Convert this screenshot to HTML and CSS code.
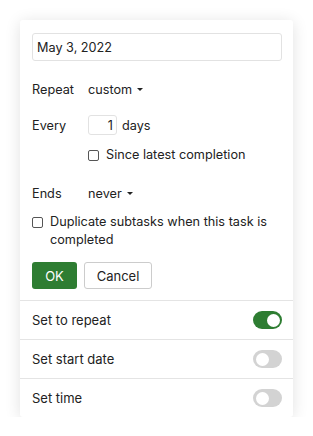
FILE: index.html
```html
<!DOCTYPE html>
<html lang="en">
<head>
    <meta charset="UTF-8">
    <meta name="viewport" content="width=device-width, initial-scale=1.0">
    <title>Repeat</title>
    <link rel="stylesheet" href="styles.css">
</head>
<body>

<div class="card">
    <div class="form">
        <input class="date" type="text" value="May 3, 2022">

        <div class="row repeat-row">
            <span class="label">Repeat</span>
            <span class="select">custom <span class="caret"></span></span>
        </div>

        <div class="row every-row">
            <span class="label">Every</span>
            <input class="num" type="text" value="1">
            <span class="unit">days</span>
        </div>

        <label class="check since">
            <span class="box"></span>
            <span>Since latest completion</span>
        </label>

        <div class="row ends-row">
            <span class="label">Ends</span>
            <span class="select">never <span class="caret"></span></span>
        </div>

        <label class="check dup">
            <span class="box"></span>
            <span>Duplicate subtasks when this task is completed</span>
        </label>

        <div class="buttons">
            <button class="btn ok">OK</button>
            <button class="btn cancel">Cancel</button>
        </div>
    </div>

    <div class="option">
        <span>Set to repeat</span>
        <span class="toggle on"><span class="knob"></span></span>
    </div>
    <div class="option">
        <span>Set start date</span>
        <span class="toggle"><span class="knob"></span></span>
    </div>
    <div class="option">
        <span>Set time</span>
        <span class="toggle"><span class="knob"></span></span>
    </div>
</div>

</body>
</html>
```

FILE: styles.css
```css
body {
    margin: 0;
    background: #fff;
    font-family: Inter, "Noto Sans", sans-serif;
    font-size: 13px;
    color: #222;
}
.card {
    margin: 20px 0 0 20px;
    width: 273px;
    background: #fff;
    border-radius: 3px;
    box-shadow: 0 2px 16px rgba(0, 0, 0, 0.12);
}
.form {
    padding: 13px 11px 11px 12px;
    display: flex;
    flex-direction: column;
    font-size: 12.7px;
}
.date {
    box-sizing: border-box;
    width: 250px;
    height: 28px;
    border: 1px solid #e2e2e2;
    border-radius: 3px;
    padding: 0 4px;
    font: inherit;
    color: #222;
}
.row {
    display: flex;
    align-items: center;
    height: 18px;
}
.label {
    width: 56px;
}
.select {
    display: flex;
    align-items: center;
}
.caret {
    display: inline-block;
    margin-left: 5px;
    border-left: 3.5px solid transparent;
    border-right: 3.5px solid transparent;
    border-top: 3.5px solid #222;
}
.repeat-row {
    margin-top: 19px;
}
.every-row {
    margin-top: 17px;
    height: 20px;
}
.num {
    box-sizing: border-box;
    width: 29px;
    height: 20px;
    border: 1px solid #e2e2e2;
    border-radius: 3px;
    padding: 0 3px;
    text-align: right;
    font: inherit;
    color: #222;
}
.unit {
    margin-left: 5px;
}
.check {
    display: flex;
    align-items: flex-start;
    line-height: 18px;
}
.box {
    flex: none;
    box-sizing: border-box;
    width: 11px;
    height: 11px;
    margin-top: 4px;
    margin-right: 7px;
    border: 1px solid #555;
    border-radius: 2px;
}
.since {
    margin-top: 11px;
    margin-left: 56px;
}
.ends-row {
    margin-top: 20px;
}
.dup {
    margin-top: 11px;
}
.buttons {
    display: flex;
    gap: 7px;
    margin-top: 13px;
}
.btn {
    height: 27px;
    border-radius: 3px;
    font: inherit;
    font-size: 13px;
    padding: 0;
}
.ok {
    width: 45px;
    background: #2e7d32;
    border: none;
    color: #fff;
}
.cancel {
    width: 68px;
    background: #fff;
    border: 1px solid #ccc;
    color: #222;
}
.option {
    display: flex;
    align-items: center;
    justify-content: space-between;
    height: 38px;
    padding: 0 11px 0 12px;
    border-top: 1px solid #e4e4e4;
}
.toggle {
    box-sizing: border-box;
    width: 29px;
    height: 18px;
    border-radius: 9px;
    background: #d3d3d3;
    padding: 2.5px;
    display: flex;
}
.toggle.on {
    background: #2e7d32;
    justify-content: flex-end;
}
.knob {
    width: 13px;
    height: 13px;
    border-radius: 50%;
    background: #fff;
}
```
